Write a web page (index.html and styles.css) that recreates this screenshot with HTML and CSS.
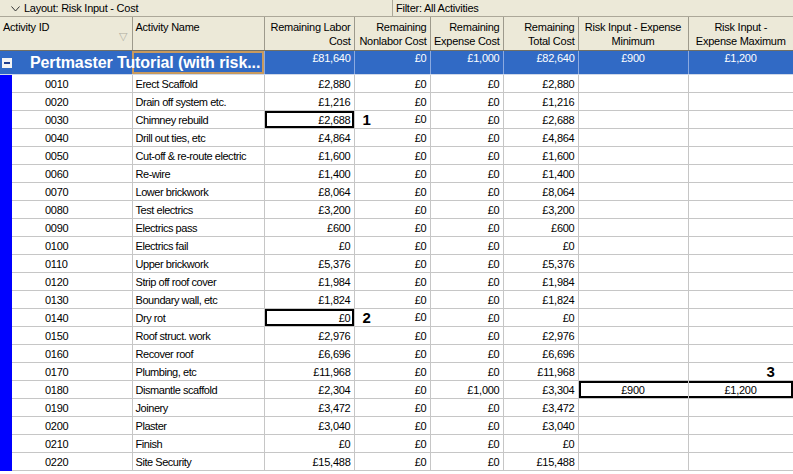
FILE: index.html
```html
<!DOCTYPE html>
<html>
<head>
<meta charset="utf-8">
<link rel="stylesheet" href="styles.css">
</head>
<body>
<div class="topbar">
  <div class="layout-box">
    <svg class="chev" width="9" height="6" viewBox="0 0 9 6"><polyline points="0.5,0.5 4.5,5 8.5,0.5" fill="none" stroke="#333" stroke-width="1"/></svg>
    <span>Layout: Risk Input - Cost</span>
  </div>
  <div class="filter-box">Filter: All Activities</div>
</div>
<table class="grid">
  <colgroup>
    <col style="width:12px"><col style="width:120px"><col style="width:132px"><col style="width:90px"><col style="width:76px"><col style="width:73px"><col style="width:75px"><col style="width:110px"><col style="width:105px">
  </colgroup>
  <thead>
    <tr class="head">
      <th colspan="2" class="h-left"><div class="h-id">Activity ID<span class="sort">&#9661;</span></div></th>
      <th class="h-left">Activity Name</th>
      <th class="h-right">Remaining Labor<br>Cost</th>
      <th class="h-right">Remaining<br>Nonlabor Cost</th>
      <th class="h-right">Remaining<br>Expense Cost</th>
      <th class="h-right">Remaining<br>Total Cost</th>
      <th class="h-center">Risk Input - Expense<br>Minimum</th>
      <th class="h-center">Risk Input -<br>Expense Maximum</th>
    </tr>
  </thead>
  <tbody id="rows">
    <tr class="group">
      <td class="g-stripe"><span class="minus"></span></td>
      <td class="g-title">Pertmaster Tutorial (with risk...</td>
      <td class="g-focus"></td>
      <td class="num">£81,640</td>
      <td class="num">£0</td>
      <td class="num">£1,000</td>
      <td class="num">£82,640</td>
      <td class="ctr">£900</td>
      <td class="ctr">£1,200</td>
    </tr>
  </tbody>
</table>
<script>
var data = [
["0010","Erect Scaffold","£2,880","£0","£0","£2,880"],
["0020","Drain off system etc.","£1,216","£0","£0","£1,216"],
["0030","Chimney rebuild","£2,688","£0","£0","£2,688"],
["0040","Drill out ties, etc","£4,864","£0","£0","£4,864"],
["0050","Cut-off & re-route electric","£1,600","£0","£0","£1,600"],
["0060","Re-wire","£1,400","£0","£0","£1,400"],
["0070","Lower brickwork","£8,064","£0","£0","£8,064"],
["0080","Test electrics","£3,200","£0","£0","£3,200"],
["0090","Electrics pass","£600","£0","£0","£600"],
["0100","Electrics fail","£0","£0","£0","£0"],
["0110","Upper brickwork","£5,376","£0","£0","£5,376"],
["0120","Strip off roof cover","£1,984","£0","£0","£1,984"],
["0130","Boundary wall, etc","£1,824","£0","£0","£1,824"],
["0140","Dry rot","£0","£0","£0","£0"],
["0150","Roof struct. work","£2,976","£0","£0","£2,976"],
["0160","Recover roof","£6,696","£0","£0","£6,696"],
["0170","Plumbing, etc","£11,968","£0","£0","£11,968"],
["0180","Dismantle scaffold","£2,304","£0","£1,000","£3,304"],
["0190","Joinery","£3,472","£0","£0","£3,472"],
["0200","Plaster","£3,040","£0","£0","£3,040"],
["0210","Finish","£0","£0","£0","£0"],
["0220","Site Security","£15,488","£0","£0","£15,488"]
];
var tb = document.getElementById('rows');
data.forEach(function(r){
  var tr = document.createElement('tr');
  tr.className = 'row';
  var labCls = 'num', nonCls = 'num', minCls = 'ctr', maxCls = 'ctr';
  var nonMark = '', maxMark = '', minTxt = '', maxTxt = '';
  if (r[0] === '0030') { labCls += ' boxed'; nonMark = '<span class="mark">1</span>'; }
  if (r[0] === '0140') { labCls += ' boxed'; nonMark = '<span class="mark">2</span>'; }
  if (r[0] === '0170') { maxMark = '<span class="mark3">3</span>'; }
  if (r[0] === '0180') { minCls += ' box-l'; maxCls += ' box-r'; minTxt = '£900'; maxTxt = '£1,200'; }
  tr.innerHTML = '<td class="stripe"></td>' +
    '<td class="id">' + r[0] + '</td>' +
    '<td class="name">' + r[1].replace('&','&amp;') + '</td>' +
    '<td class="' + labCls + '">' + r[2] + '</td>' +
    '<td class="' + nonCls + '">' + nonMark + r[3] + '</td>' +
    '<td class="num">' + r[4] + '</td>' +
    '<td class="num">' + r[5] + '</td>' +
    '<td class="' + minCls + '">' + minTxt + '</td>' +
    '<td class="' + maxCls + '">' + maxMark + maxTxt + '</td>';
  tb.appendChild(tr);
});
</script>
</body>
</html>
```
FILE: styles.css
```css
html, body {
  margin: 0;
  padding: 0;
  background: #ffffff;
  font-family: "Liberation Sans", Arial, sans-serif;
  font-size: 11px;
  letter-spacing: -0.25px;
  color: #000;
  overflow: hidden;
}
.topbar {
  display: flex;
  height: 16px;
  background: #ece9d8;
  border-bottom: 1px solid #aca899;
  line-height: 16px;
}
.layout-box {
  border-right: 1px solid #aca899;
  display: flex;
  align-items: center;
  padding-left: 11px;
  box-sizing: border-box;
  width: 393px;
}
.chev { margin-right: 4px; margin-top: 1px; }
.filter-box {
  padding-left: 3px;
  flex: 1;
}
.grid {
  border-collapse: collapse;
  table-layout: fixed;
  width: 793px;
}
.head th {
  background: #ece9d8;
  font-weight: normal;
  height: 30px;
  padding: 3px 3px 0 3px;
  vertical-align: top;
  line-height: 14px;
  border-right: 1px solid #9d9a8c;
  border-bottom: 1px solid #716f64;
  white-space: nowrap;
  overflow: hidden;
}
.head th:last-child { border-right: none; }
.h-left { text-align: left; }
.h-right { text-align: right; }
.h-center { text-align: center; }
.h-id { position: relative; height: 28px; }
.sort {
  position: absolute;
  right: 2px;
  top: 9px;
  color: #b0ada0;
  font-size: 11px;
}
.group td {
  background: #316ac5;
  color: #fff;
  height: 22px;
  padding: 0 3px;
  border-right: 1px solid #8caae0;
  border-bottom: 1px solid #cfd8e8;
  vertical-align: middle;
  white-space: nowrap;
}
.group td.num { text-align: right; vertical-align: top; padding-top: 1px; }
.group td.ctr { text-align: center; vertical-align: top; padding-top: 1px; }
.group td.g-stripe { border-right: none; padding: 0 0 0 2px; }
.minus {
  display: block;
  width: 10px;
  height: 10px;
  background: #f4f4f4;
  position: relative;
}
.minus::after {
  content: "";
  position: absolute;
  left: 2px;
  top: 4px;
  width: 6px;
  height: 2px;
  background: #1f3f8f;
}
.group td.g-title {
  overflow: visible;
  font-weight: bold;
  font-size: 16px;
  letter-spacing: -0.1px;
  padding-left: 18px;
  border-right: none;
}
.group td.g-focus {
  box-shadow: inset 0 0 0 2px #c89a5e;
}
.row td {
  height: 17px;
  padding: 0 3px;
  border-right: 1px solid #c6c6c6;
  border-bottom: 1px solid #c6c6c6;
  white-space: nowrap;
  overflow: hidden;
  line-height: 14px;
}
.row td.stripe {
  background: #0000ff;
  border-bottom: none;
  border-right: none;
  padding: 0;
}
.row td.id { padding-left: 33px; }
.row td.name { letter-spacing: -0.45px; }
.num { text-align: right; }
.ctr { text-align: center; }
.row td.boxed { box-shadow: inset 0 0 0 2px #000; }
.row td.box-l { box-shadow: inset 2px 0 0 #000, inset 0 2px 0 #000, inset 0 -2px 0 #000; }
.row td.box-r { box-shadow: inset -2px 0 0 #000, inset 0 2px 0 #000, inset 0 -2px 0 #000; }
.mark {
  float: left;
  font-weight: bold;
  font-size: 15px;
  line-height: 16px;
  margin-left: 5px;
}
.mark3 {
  float: right;
  font-weight: bold;
  font-size: 15px;
  line-height: 16px;
  margin-right: 15px;
}
```
